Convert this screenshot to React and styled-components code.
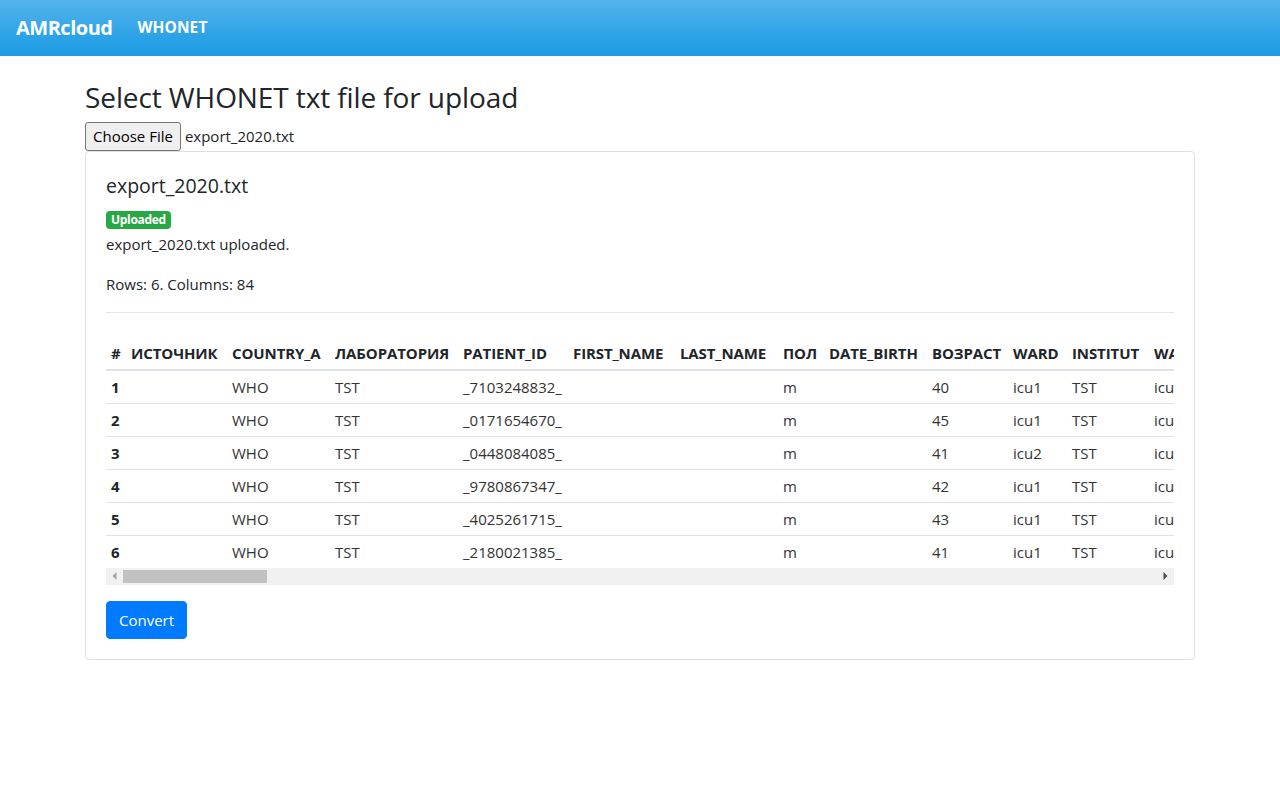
import React from "react";
import styled, { createGlobalStyle } from "styled-components";

const GlobalStyle = createGlobalStyle`
  html, body { margin: 0; padding: 0; background: #fff; }
  body {
    font-family: "Open Sans", "Noto Sans", sans-serif;
    font-size: 16px;
    line-height: 1.5;
    color: #212529;
  }
  * { box-sizing: border-box; }
`;

const Navbar = styled.nav`
  height: 56px;
  display: flex;
  align-items: center;
  padding: 0 16px;
  background-image: linear-gradient(#54b4eb, #2fa4e7 60%, #1d9ce5);
`;

const Brand = styled.a`
  color: #fff;
  font-size: 20px;
  font-weight: 700;
  letter-spacing: -0.5px;
  margin-right: 17px;
  text-decoration: none;
`;

const NavLink = styled.a`
  color: #fff;
  font-size: 15.5px;
  font-weight: 700;
  padding: 8px;
  letter-spacing: 0.1px;
  text-decoration: none;
`;

const Container = styled.main`
  width: 1110px;
  margin: 24px auto 0;
`;

const Title = styled.h3`
  font-size: 28px;
  font-weight: 500;
  line-height: 1.2;
  margin: 0 0 8px;
  letter-spacing: -0.1px;
  position: relative;
  top: 1px;
`;

const FileRow = styled.div`
  display: flex;
  align-items: center;
  gap: 4px;
  height: 29px;
`;

const FileButton = styled.button`
  font-family: inherit;
  font-size: 15px;
  height: 29px;
  padding: 0 7px;
  background: #efefef;
  border: 1px solid #767676;
  border-radius: 3px;
  color: #000;
`;

const FileName = styled.span`
  font-size: 15px;
  color: #212529;
`;

const Card = styled.section`
  border: 1px solid rgba(0, 0, 0, 0.125);
  border-radius: 4px;
  padding: 20px;
`;

const CardTitle = styled.h5`
  font-size: 19.5px;
  font-weight: 500;
  line-height: 24px;
  margin: 0 0 10px;
  padding-top: 2px;
`;

const BadgeLine = styled.div`
  height: 24px;
  display: flex;
  align-items: center;
`;

const Badge = styled.span`
  display: inline-block;
  background: #28a745;
  color: #fff;
  font-size: 12px;
  font-weight: 700;
  line-height: 12px;
  padding: 3px 5px;
  border-radius: 4px;
  letter-spacing: -0.3px;
`;

const Text = styled.p`
  margin: 0 0 16px;
  font-size: 15px;
  line-height: 24px;
`;

const Rule = styled.hr`
  border: 0;
  border-top: 1px solid rgba(0, 0, 0, 0.1);
  margin: 16px 0 0;
`;

const Scroller = styled.div`
  margin-top: 23px;
  overflow: hidden;
`;

const Table = styled.table`
  border-collapse: collapse;
  table-layout: fixed;
  width: ${(p) => p.$w}px;
  font-size: 15px;
`;

const Col = styled.col`
  width: ${(p) => p.$w}px;
`;

const HeadCell = styled.th`
  text-align: left;
  font-weight: 700;
  white-space: nowrap;
  padding: 5px 5px 4px;
  line-height: 24px;
  border-bottom: 2px solid #dee2e6;
  letter-spacing: -0.1px;
`;

const RowHead = styled.th`
  text-align: left;
  font-weight: 700;
  padding: 4px 5px;
  line-height: 24px;
  border-top: 1px solid #dee2e6;
`;

const Cell = styled.td`
  white-space: nowrap;
  padding: 4px 5px;
  line-height: 24px;
  border-top: 1px solid #dee2e6;
  color: #333;
`;

const ScrollBar = styled.div`
  display: flex;
  height: 17px;
  background: #f1f1f1;
`;

const ScrollArrow = styled.div`
  width: 17px;
  flex: none;
  display: flex;
  align-items: center;
  justify-content: center;
`;

const ScrollTrack = styled.div`
  flex: 1;
  display: flex;
  align-items: center;
`;

const ScrollThumb = styled.div`
  width: ${(p) => p.$w}px;
  height: 13px;
  background: #c1c1c1;
`;

const ConvertButton = styled.button`
  margin-top: 16px;
  font-family: inherit;
  font-size: 15px;
  line-height: 24px;
  padding: 6px 12px;
  color: #fff;
  background: #007bff;
  border: 1px solid #007bff;
  border-radius: 4px;
`;

const COLUMNS = [
  { name: "ИСТОЧНИК", w: 101, key: null },
  { name: "COUNTRY_A", w: 103, key: "country" },
  { name: "ЛАБОРАТОРИЯ", w: 128, key: "lab" },
  { name: "PATIENT_ID", w: 110, key: "pid" },
  { name: "FIRST_NAME", w: 107, key: null },
  { name: "LAST_NAME", w: 103, key: null },
  { name: "ПОЛ", w: 46, key: "sex" },
  { name: "DATE_BIRTH", w: 103, key: null },
  { name: "ВОЗРАСТ", w: 81, key: "age" },
  { name: "WARD", w: 59, key: "ward" },
  { name: "INSTITUT", w: 82, key: "inst" },
  { name: "WARD_TYPE", w: 91, key: "wtype" },
];

const ROWS = [
  { pid: "_7103248832_", age: "40", ward: "icu1" },
  { pid: "_0171654670_", age: "45", ward: "icu1" },
  { pid: "_0448084085_", age: "41", ward: "icu2" },
  { pid: "_9780867347_", age: "42", ward: "icu1" },
  { pid: "_4025261715_", age: "43", ward: "icu1" },
  { pid: "_2180021385_", age: "41", ward: "icu1" },
].map((r) => ({ ...r, country: "WHO", lab: "TST", sex: "m", inst: "TST", wtype: "icu" }));

const NUM_W = 20;
const TABLE_W = NUM_W + COLUMNS.reduce((s, c) => s + c.w, 0);

function Arrow({ dir, color }) {
  return (
    <svg width="5" height="8" viewBox="0 0 5 8">
      <polygon points={dir === "left" ? "4.5,0 4.5,8 0.5,4" : "0.5,0 0.5,8 4.5,4"} fill={color} />
    </svg>
  );
}

export default function App() {
  return (
    <>
      <GlobalStyle />
      <Navbar>
        <Brand href="#">AMRcloud</Brand>
        <NavLink href="#">WHONET</NavLink>
      </Navbar>
      <Container>
        <Title>Select WHONET txt file for upload</Title>
        <FileRow>
          <FileButton type="button">Choose File</FileButton>
          <FileName>export_2020.txt</FileName>
        </FileRow>
        <Card>
          <CardTitle>export_2020.txt</CardTitle>
          <BadgeLine>
            <Badge>Uploaded</Badge>
          </BadgeLine>
          <Text>export_2020.txt uploaded.</Text>
          <Text>Rows: 6. Columns: 84</Text>
          <Rule />
          <Scroller>
            <Table $w={TABLE_W}>
              <colgroup>
                <Col $w={NUM_W} />
                {COLUMNS.map((c) => (
                  <Col key={c.name} $w={c.w} />
                ))}
              </colgroup>
              <thead>
                <tr>
                  <HeadCell>#</HeadCell>
                  {COLUMNS.map((c) => (
                    <HeadCell key={c.name}>{c.name}</HeadCell>
                  ))}
                </tr>
              </thead>
              <tbody>
                {ROWS.map((r, i) => (
                  <tr key={i}>
                    <RowHead>{i + 1}</RowHead>
                    {COLUMNS.map((c) => (
                      <Cell key={c.name}>{c.key ? r[c.key] : ""}</Cell>
                    ))}
                  </tr>
                ))}
              </tbody>
            </Table>
          </Scroller>
          <ScrollBar>
            <ScrollArrow>
              <Arrow dir="left" color="#a3a3a3" />
            </ScrollArrow>
            <ScrollTrack>
              <ScrollThumb $w={144} />
            </ScrollTrack>
            <ScrollArrow>
              <Arrow dir="right" color="#505050" />
            </ScrollArrow>
          </ScrollBar>
          <ConvertButton type="button">Convert</ConvertButton>
        </Card>
      </Container>
    </>
  );
}
